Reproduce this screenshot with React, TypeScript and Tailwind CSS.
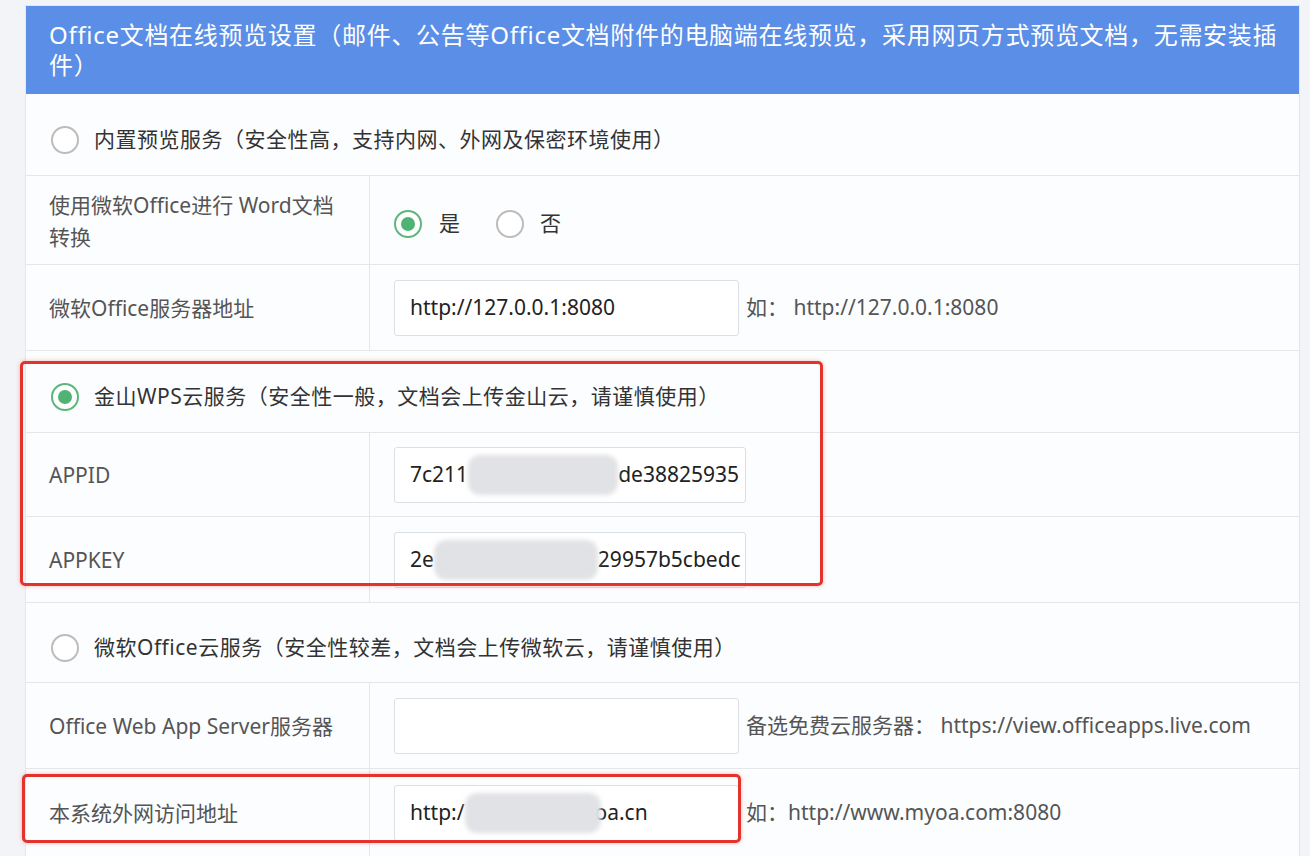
import type { ReactNode } from "react";

const font = { fontFamily: '"Noto Sans", "Noto Sans CJK SC", sans-serif' };

function Radio({ checked = false }: { checked?: boolean }) {
  return (
    <span
      className={`flex w-[28px] h-[28px] shrink-0 items-center justify-center rounded-full border-2 bg-white ${
        checked ? "border-[#5cb67c]" : "border-[#bcbcbc]"
      }`}
    >
      {checked && <span className="w-[14px] h-[14px] rounded-full bg-[#4fb373]" />}
    </span>
  );
}

function SectionRow({ h, checked, children }: { h: string; checked?: boolean; children: ReactNode }) {
  return (
    <div className={`${h} flex items-center gap-[15px] pl-[25px] pt-[10px] border-b border-[#e3e6eb] text-[21px] tracking-[0.5px] text-[#333]`}>
      <Radio checked={checked} />
      <span>{children}</span>
    </div>
  );
}

function FieldRow({ h, label, children }: { h: string; label: ReactNode; children: ReactNode }) {
  return (
    <div className={`${h} flex border-b border-[#e3e6eb]`}>
      <div className="w-[344px] shrink-0 flex items-center pl-[23px] border-r border-[#e3e6eb] text-[21px] leading-[32px] text-[#555]">
        {label}
      </div>
      <div className="flex-1 flex items-center pl-[24px] text-[21px]">{children}</div>
    </div>
  );
}

function Blur({ w }: { w: number }) {
  return (
    <span
      className="inline-block h-[40px] rounded-xl bg-[#e1e2e5] blur-[2px] shrink-0"
      style={{ width: w }}
    />
  );
}

function Input({ wide = false, children }: { wide?: boolean; children?: ReactNode }) {
  return (
    <div
      className={`${wide ? "w-[352px]" : "w-[345px]"} h-[56px] shrink-0 flex items-center overflow-hidden whitespace-nowrap rounded-[3px] border border-[#dcdfe4] bg-white pl-[15px] text-[#222]`}
    >
      {children}
    </div>
  );
}

function Hint({ children }: { children: ReactNode }) {
  return <span className="ml-[7px] text-[#555]">{children}</span>;
}

export default function App() {
  return (
    <div className="relative min-h-[856px] bg-[#f3f4f7] pt-[5px] pl-[25px] pr-[10px]" style={font}>
      <div className="bg-[#fcfdff] border-x border-t border-[#e3e6eb]">
        {/* header */}
        <div className="h-[88px] bg-[#5b8ee6] text-white text-[24px] tracking-[0.7px] leading-[30px] pl-[23px] pt-[14px] whitespace-nowrap overflow-hidden">
          Office文档在线预览设置（邮件、公告等Office文档附件的电脑端在线预览，采用网页方式预览文档，无需安装插
          <br />
          件）
        </div>

        <SectionRow h="h-[82px]">内置预览服务（安全性高，支持内网、外网及保密环境使用）</SectionRow>

        <FieldRow
          h="h-[89px]"
          label={
            <span className="pt-[2px]">
              使用微软Office进行 Word文档
              <br />
              转换
            </span>
          }
        >
          <div className="flex items-center pt-[8px] text-[#333]">
            <Radio checked />
            <span className="ml-[17px]">是</span>
            <span className="ml-[36px]">
              <Radio />
            </span>
            <span className="ml-[16px]">否</span>
          </div>
        </FieldRow>

        <FieldRow h="h-[86px]" label="微软Office服务器地址">
          <Input>http://127.0.0.1:8080</Input>
          <Hint>如： http://127.0.0.1:8080</Hint>
        </FieldRow>

        <SectionRow h="h-[82px]" checked>
          金山WPS云服务（安全性一般，文档会上传金山云，请谨慎使用）
        </SectionRow>

        <FieldRow h="h-[84px]" label="APPID">
          <Input wide>
            7c211
            <Blur w={150} />
            de38825935
          </Input>
        </FieldRow>

        <FieldRow h="h-[86px]" label="APPKEY">
          <Input wide>
            2e
            <Blur w={164} />
            29957b5cbedc
          </Input>
        </FieldRow>

        <SectionRow h="h-[80px]">微软Office云服务（安全性较差，文档会上传微软云，请谨慎使用）</SectionRow>

        <FieldRow h="h-[86px]" label="Office Web App Server服务器">
          <Input />
          <Hint>备选免费云服务器： https://view.officeapps.live.com</Hint>
        </FieldRow>

        <FieldRow h="h-[88px]" label="本系统外网访问地址">
          <Input>
            http:/
            <Blur w={136} />
            <span className="-ml-[6px]">oa.cn</span>
          </Input>
          <Hint>如：http://www.myoa.com:8080</Hint>
        </FieldRow>
      </div>

      {/* annotation boxes */}
      <div className="absolute left-[20px] top-[361px] w-[803px] h-[225px] rounded-[5px] border-[3px] border-[#e2342c] shadow-[0_0_4px_rgba(226,52,44,0.35)]" />
      <div className="absolute left-[22px] top-[774px] w-[719px] h-[69px] rounded-[5px] border-[3px] border-[#e2342c] shadow-[0_0_4px_rgba(226,52,44,0.35)]" />
    </div>
  );
}
